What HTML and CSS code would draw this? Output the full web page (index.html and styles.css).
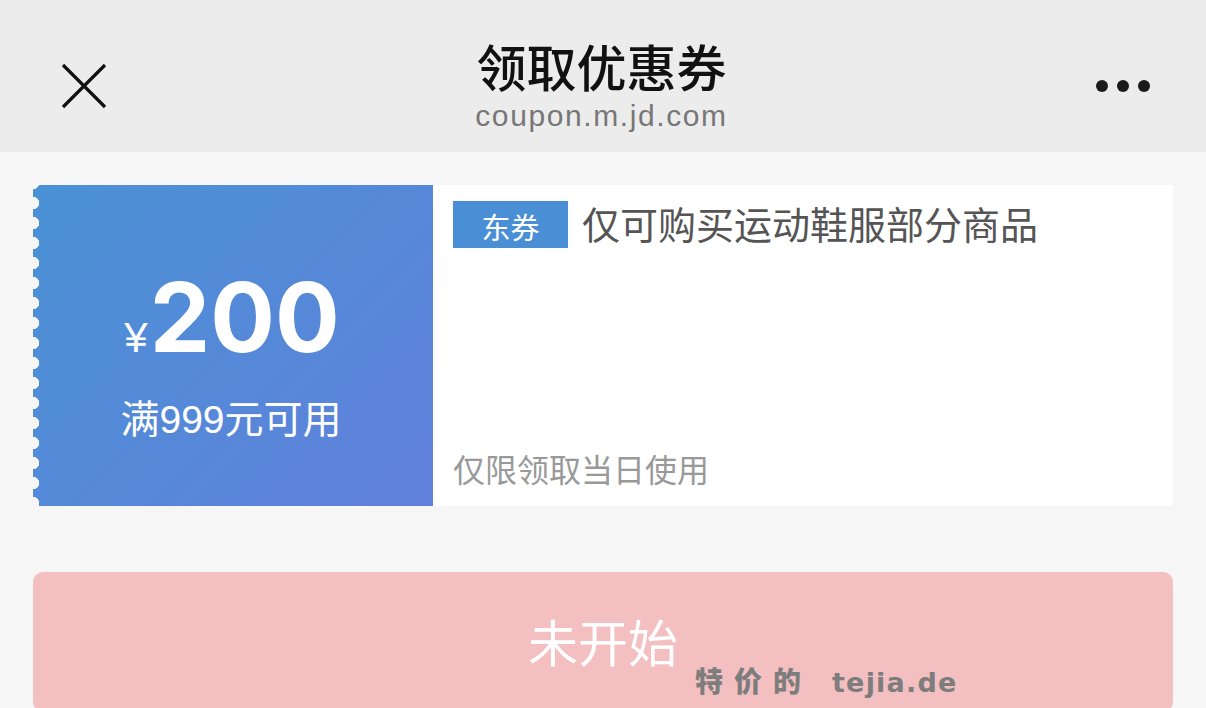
FILE: index.html
```html
<!DOCTYPE html>
<html lang="zh-CN">
<head>
  <meta charset="UTF-8" />
  <meta name="viewport" content="width=device-width, initial-scale=1.0"/>
  <title>领取优惠券</title>
  <link rel="stylesheet" href="styles.css">
</head>
<body>

  <!-- Header -->
  <header class="topbar">
    <button class="close-btn" aria-label="关闭">
      <svg width="46" height="46" viewBox="0 0 46 46">
        <path d="M2 2 L44 44 M44 2 L2 44" stroke="#111" stroke-width="3.2" fill="none"/>
      </svg>
    </button>
    <div class="title-box">
      <div class="title">领取优惠券</div>
      <div class="subtitle">coupon.m.jd.com</div>
    </div>
    <button class="more-btn" aria-label="更多">
      <span></span><span></span><span></span>
    </button>
  </header>

  <main class="content">
    <!-- Coupon -->
    <div class="coupon">
      <div class="coupon-left">
        <div class="amount"><span class="yen">¥</span>200</div>
        <div class="limit">满999元可用</div>
      </div>
      <div class="coupon-right">
        <div class="desc">
          <span class="tag">东券</span>
          <span class="desc-text">仅可购买运动鞋服部分商品</span>
        </div>
        <div class="note">仅限领取当日使用</div>
      </div>
    </div>

    <!-- Button -->
    <div class="action">
      <button class="status-btn">未开始</button>
      <div class="watermark"><span class="wm-cn">特价的</span><span class="wm-en">tejia.de</span></div>
    </div>
  </main>

</body>
</html>
```

FILE: styles.css
```css
body {
  margin: 0;
  padding: 0;
  background: #f6f6f6;
  font-family: "Liberation Sans", "Noto Sans CJK SC", sans-serif;
  overflow: hidden;
}

/* Header */
.topbar {
  height: 152px;
  background: #ececec;
  display: flex;
  align-items: center;
  justify-content: space-between;
  padding: 0 56px 0 61px;
  box-sizing: border-box;
}

.close-btn,
.more-btn {
  background: none;
  border: none;
  padding: 0;
  cursor: pointer;
}

.close-btn {
  width: 46px;
  height: 46px;
  margin-top: 20px;
}

.close-btn svg {
  display: block;
}

.title-box {
  display: flex;
  flex-direction: column;
  align-items: center;
  margin-top: 18px;
}

.title {
  font-family: "Noto Sans CJK SC", sans-serif;
  font-size: 50px;
  font-weight: 500;
  color: #111;
  line-height: 56px;
}

.subtitle {
  font-family: "Liberation Sans", sans-serif;
  font-size: 30px;
  color: #777;
  line-height: 34px;
  margin-top: 6px;
  letter-spacing: 1.6px;
}

.more-btn {
  display: flex;
  gap: 9px;
  margin-top: 20px;
}

.more-btn span {
  width: 12px;
  height: 12px;
  border-radius: 50%;
  background: #1a1a1a;
}

/* Content */
.content {
  padding: 33px 33px 0;
}

.coupon {
  display: flex;
  height: 321px;
}

.coupon-left {
  position: relative;
  width: 400px;
  background: linear-gradient(135deg, #4a92d5 0%, #5589d8 50%, #6180dc 100%);
  border-radius: 6px 0 0 6px;
  color: #fff;
  display: flex;
  flex-direction: column;
  align-items: center;
  justify-content: center;
}

.coupon-left::before {
  content: "";
  position: absolute;
  left: -6px;
  top: 0;
  bottom: 0;
  width: 12px;
  background: radial-gradient(circle at 6px 10px, #f6f6f6 6px, transparent 6.5px) 0 8px / 12px 20px repeat-y;
}

.amount {
  font-family: Inter, "Liberation Sans", sans-serif;
  font-size: 96px;
  font-weight: 700;
  line-height: 100px;
  margin-top: 18px;
  margin-left: -2px;
}

.yen {
  font-family: "Liberation Sans", sans-serif;
  font-size: 42px;
  font-weight: 400;
  margin-right: 2px;
}

.limit {
  font-size: 39px;
  line-height: 44px;
  margin-top: 10px;
  margin-left: -4px;
}

.coupon-right {
  flex: 1;
  background: #fff;
  padding: 16px 20px 18px;
  display: flex;
  flex-direction: column;
  justify-content: space-between;
}

.desc {
  display: flex;
  align-items: center;
}

.tag {
  background: #4a8fd6;
  color: #fff;
  font-size: 29px;
  width: 115px;
  height: 47px;
  line-height: 50px;
  text-align: center;
  margin-right: 14px;
  font-family: "Noto Sans CJK SC", sans-serif;
}

.desc-text {
  font-family: "Noto Sans CJK SC", sans-serif;
  font-size: 38px;
  color: #555;
  line-height: 48px;
  margin-top: -4px;
}

.note {
  font-family: "Noto Sans CJK SC", sans-serif;
  font-size: 32px;
  color: #999;
  line-height: 40px;
}

/* Action button */
.action {
  position: relative;
  margin-top: 66px;
}

.status-btn {
  width: 100%;
  height: 140px;
  border: none;
  border-radius: 10px;
  background: #f4bfc1;
  color: #fff;
  font-family: "Noto Sans CJK SC", sans-serif;
  font-size: 50px;
  padding-bottom: 6px;
  display: block;
}

.watermark {
  position: absolute;
  left: 662px;
  top: 88px;
  display: flex;
  align-items: baseline;
  font-family: "Noto Sans CJK SC", sans-serif;
  font-size: 28px;
  font-weight: 900;
  color: #7d7d7d;
}

.wm-cn {
  letter-spacing: 11px;
  margin-right: 20px;
}

.wm-en {
  font-family: "DejaVu Sans", sans-serif;
  font-weight: 700;
  font-size: 27px;
  letter-spacing: 1.2px;
}
```
